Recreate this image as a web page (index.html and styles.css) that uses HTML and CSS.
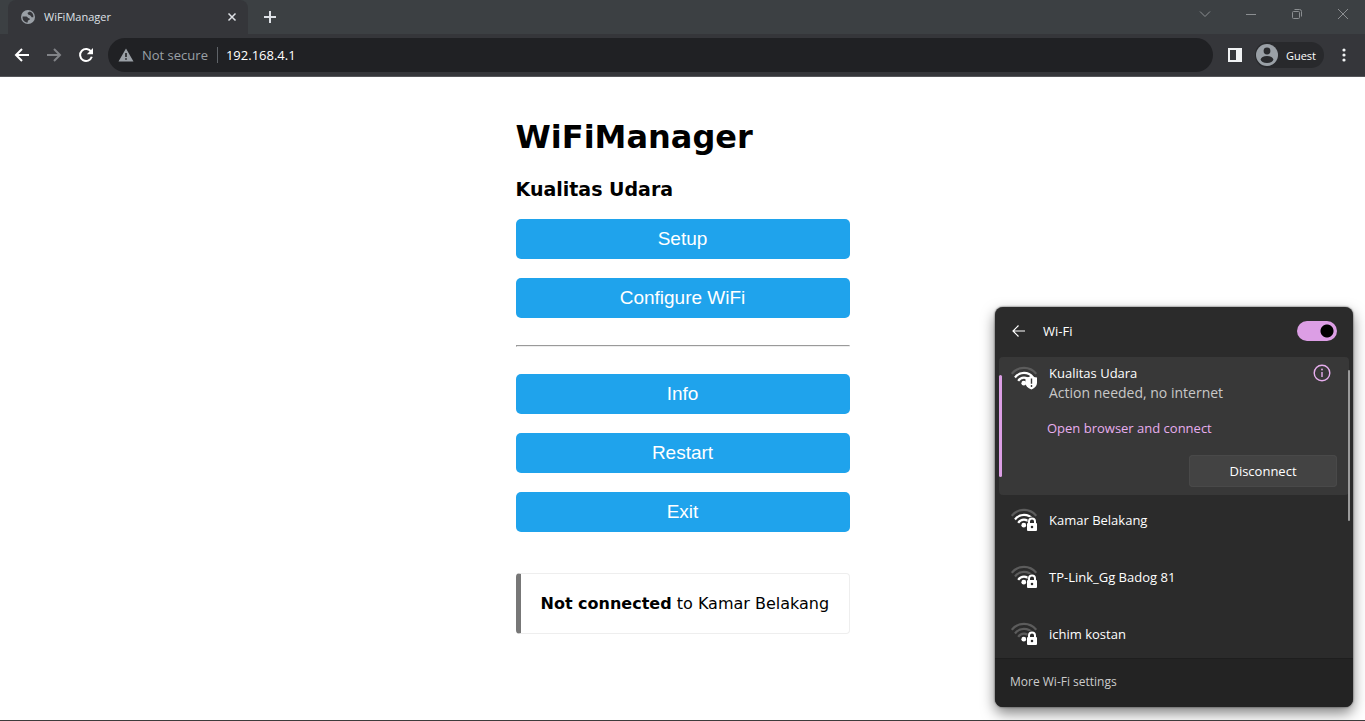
FILE: index.html
```html
<!DOCTYPE html>
<html lang="en">
<head>
<meta charset="utf-8">
<title>WiFiManager</title>
<link rel="stylesheet" href="styles.css">
</head>
<body>
<svg class="defs" aria-hidden="true">
  <symbol id="wifi-base" viewBox="0 0 26 24">
    <path class="arc arc-outer" d="M.8 7.800A15.500 15.500 0 0 1 25.200 7.800"/>
    <path class="arc arc-mid" d="M4 11.500A11.200 11.200 0 0 1 22 11.500"/>
    <path class="arc arc-inner" d="M7.200 14.800A7 7 0 0 1 18.800 14.800"/>
    <circle cx="12.800" cy="17.200" r="2.400" fill="#fff"/>
  </symbol>
  <symbol id="lock" viewBox="0 0 26 24">
    <path d="M15.500 14.800h1V13a4.500 4.500 0 0 1 9 0v1.800h.5V24H15.500z" fill="#2b2b2b"/>
    <path d="M18 16v-2.500a3 3 0 0 1 6 0V16" fill="none" stroke="#fff" stroke-width="2"/>
    <path fill-rule="evenodd" d="M17 15h8a1 1 0 0 1 1 1v6a1 1 0 0 1-1 1h-8a1 1 0 0 1-1-1v-6a1 1 0 0 1 1-1zM21 17.700a1.300 1.300 0 1 0 0 2.600 1.300 1.300 0 0 0 0-2.600z" fill="#fff"/>
  </symbol>
</svg>
<header class="browser">
  <div class="tabstrip">
    <div class="tab">
      <svg class="globe" width="16" height="16" viewBox="0 0 16 16"><circle cx="8" cy="8" r="7" fill="#9aa0a6"/><path d="M2.600 7.500h3.600c1.500 0 1.200 1.700 2.700 1.700 1 0 1.200.8.700 1.500-.6.700-1.600.4-1.800 1.300l-.1 1.500C4.400 13.500 2.200 11 2.600 7.500zM9.600 2.600c-.3 1.100-1.900.5-2 1.600-.1.800.9.700.8 1.400 0 .8 1.500.6 2.200 1.100.8.600.6 1.600 1.500 1.600h1.300C13.700 5.500 12.200 3.200 9.600 2.600z" fill="#35363a"/></svg>
      <span class="tab-title">WiFiManager</span>
      <button class="icon-btn" aria-label="Close tab"><svg width="16" height="16" viewBox="0 0 16 16"><path d="M4.500 4.500l7 7m0-7l-7 7" stroke="#dee1e6" stroke-width="1.500"/></svg></button>
    </div>
    <button class="icon-btn new-tab" aria-label="New tab"><svg width="16" height="16" viewBox="0 0 16 16"><path d="M8 2v12M2 8h12" stroke="#dee1e6" stroke-width="2"/></svg></button>
    <div class="window-controls">
      <button class="icon-btn" aria-label="Search tabs"><svg width="14" height="14" viewBox="0 0 14 14"><path d="M2 4.500l5 5 5-5" fill="none" stroke="#8b8e91"/></svg></button>
      <button class="icon-btn" aria-label="Minimize"><svg width="14" height="14" viewBox="0 0 14 14"><path d="M2 7.500h10" stroke="#8b8e91"/></svg></button>
      <button class="icon-btn" aria-label="Restore"><svg width="14" height="14" viewBox="0 0 14 14"><g fill="none" stroke="#8b8e91"><rect x="2.500" y="4.500" width="7" height="7" rx="1"/><path d="M4.500 2.500h5a2 2 0 0 1 2 2v5"/></g></svg></button>
      <button class="icon-btn" aria-label="Close"><svg width="14" height="14" viewBox="0 0 14 14"><path d="M2 2l10 10M12 2L2 12" stroke="#8b8e91"/></svg></button>
    </div>
  </div>
  <div class="toolbar">
    <button class="icon-btn" aria-label="Back"><svg width="16" height="16" viewBox="0 0 16 16"><path d="M15 8H2.500M8 2L2 8l6 6" fill="none" stroke="#fff" stroke-width="2"/></svg></button>
    <button class="icon-btn" aria-label="Forward"><svg width="16" height="16" viewBox="0 0 16 16"><path d="M1 8h12.500M8 2l6 6-6 6" fill="none" stroke="#818387" stroke-width="2"/></svg></button>
    <button class="icon-btn" aria-label="Reload"><svg width="16" height="16" viewBox="0 0 16 16"><path d="M13.200 4.800A6 6 0 1 0 13.800 9.800" fill="none" stroke="#fff" stroke-width="2"/><path d="M15 1v6.200H8.800z" fill="#fff"/></svg></button>
    <div class="omnibox">
      <svg width="16" height="16" viewBox="0 0 16 16"><path fill-rule="evenodd" d="M8 1.500L15.500 14.500H.5zM7.200 6v4h1.600V6zM7.200 11.200v1.600h1.600v-1.600z" fill="#9aa0a6"/></svg>
      <label class="security" for="address">Not secure</label>
      <input id="address" type="text" value="192.168.4.1">
    </div>
    <button class="icon-btn" aria-label="Side panel"><svg width="16" height="16" viewBox="0 0 16 16"><path fill-rule="evenodd" d="M1 1h14v14H1zM3 3v10h6V3z" fill="#f1f3f4"/></svg></button>
    <button class="profile"><svg width="22" height="22" viewBox="0 0 22 22"><circle cx="11" cy="11" r="11" fill="#9aa0a6"/><circle cx="11" cy="7" r="3.400" fill="#292a2d"/><ellipse cx="11" cy="15.500" rx="6.300" ry="3.500" fill="#292a2d"/></svg>Guest</button>
    <button class="icon-btn" aria-label="Menu"><svg width="16" height="16" viewBox="0 0 16 16" fill="#f1f3f4"><circle cx="8" cy="3" r="1.600"/><circle cx="8" cy="8" r="1.600"/><circle cx="8" cy="13" r="1.600"/></svg></button>
  </div>
</header>
<main class="portal">
  <h1>WiFiManager</h1>
  <h3>Kualitas Udara</h3>
  <div class="actions">
    <button>Setup</button>
    <button>Configure WiFi</button>
  </div>
  <hr>
  <div class="actions">
    <button>Info</button>
    <button>Restart</button>
    <button>Exit</button>
  </div>
  <p class="status"><strong>Not connected</strong> to Kamar Belakang</p>
</main>
<section class="flyout" aria-label="Wi-Fi">
  <div class="flyout-head">
    <button class="icon-btn" aria-label="Back"><svg width="14" height="14" viewBox="0 0 14 14"><path d="M13 7H1.500M6.500 1.500L1 7l5.500 5.500" fill="none" stroke="#fff" stroke-width="1.200"/></svg></button>
    <label for="wifi-toggle">Wi-Fi</label>
    <input id="wifi-toggle" class="toggle" type="checkbox" checked>
  </div>
  <div class="networks">
    <div class="current">
      <svg class="signal s3" width="26" height="24" viewBox="0 0 26 24"><use href="#wifi-base"/><path d="M20.300 9.500c1.700 1.300 3.500 2 5.700 2V17c0 3-2.200 5-5.500 6.500C16.500 22 14.500 20 14.500 17v-5.500c2.300 0 4.300-.7 5.800-2z" fill="#fff"/><path d="M20.500 12.500v5.300M20.500 19V21" stroke="#383838" stroke-width="1.400"/></svg>
      <div class="details">
        <div class="name-row"><span class="name">Kualitas Udara</span>
          <button class="icon-btn info" aria-label="Properties"><svg width="18" height="18" viewBox="0 0 18 18"><circle cx="9" cy="9" r="7.800" fill="none" stroke="#e7aeee" stroke-width="1.400"/><path d="M9 8v5" stroke="#e7aeee" stroke-width="1.400"/><circle cx="9" cy="5.500" r=".9" fill="#e7aeee"/></svg></button>
        </div>
        <div class="state">Action needed, no internet</div>
        <a class="connect" href="#">Open browser and connect</a>
        <button class="disconnect">Disconnect</button>
      </div>
    </div>
    <button class="network"><svg class="signal s3" width="26" height="24" viewBox="0 0 26 24"><use href="#wifi-base"/><use href="#lock"/></svg>Kamar Belakang</button>
    <button class="network"><svg class="signal s2" width="26" height="24" viewBox="0 0 26 24"><use href="#wifi-base"/><use href="#lock"/></svg>TP-Link_Gg Badog 81</button>
    <button class="network"><svg class="signal s1" width="26" height="24" viewBox="0 0 26 24"><use href="#wifi-base"/><use href="#lock"/></svg>ichim kostan</button>
    <span class="scrollbar"></span>
  </div>
  <div class="flyout-foot"><a href="#">More Wi-Fi settings</a></div>
</section>
</body>
</html>
```
FILE: styles.css
```css
* { box-sizing: border-box; }
body {
  margin: 0;
  min-height: 100vh;
  position: relative;
  background: #fff;
  border-bottom: 1px solid #3c3c3c;
  font-family: "DejaVu Sans", sans-serif;
  color: #000;
}
button, input { font-family: inherit; border: 0; padding: 0; margin: 0; }
svg { display: block; flex: none; }
.defs { position: absolute; width: 0; height: 0; }
.icon-btn { background: none; flex: none; }

.browser { font-family: "Open Sans", sans-serif; background: #35363a; border-bottom: 1px solid #55565a; }
.tabstrip { display: flex; align-items: center; height: 34px; padding-left: 8px; background: #3c4043; }
.tab {
  display: flex; align-items: center; gap: 8px;
  width: 240px; height: 34px; padding: 0 8px 0 12px;
  background: #35363a; border-radius: 8px 8px 0 0;
  color: #dee1e6; font-size: 11px;
}
.tab-title { flex: 1; padding-bottom: 2px; }
.new-tab { margin-left: 14px; }
.window-controls { display: flex; gap: 32px; margin-left: auto; padding: 0 15px 6px 0; }
.toolbar { display: flex; align-items: center; gap: 16px; height: 42px; padding: 0 13px 0 14px; }
.omnibox {
  flex: 1; display: flex; align-items: center; gap: 8px;
  height: 34px; margin: 0 -2px; padding: 0 10px;
  border-radius: 17px; background: #202124;
}
.security { color: #9aa0a6; font-size: 13px; line-height: 16px; padding-right: 9px; border-right: 1px solid #5f6368; }
.omnibox input { flex: 1; background: none; color: #fff; font-size: 13px; outline: 0; }
.profile {
  display: flex; align-items: center; gap: 8px;
  height: 26px; margin: 0 -4px; padding: 0 8px 0 1px;
  border-radius: 13px; background: #28292c;
  color: #fff; font-size: 11px;
}

.portal { width: 334px; margin: 0 auto; padding-top: 39px; }
h1 { margin: 0; font-size: 32px; line-height: 42px; }
h3 { margin: 19px 0 18px; font-size: 19px; line-height: 24px; }
.actions { display: grid; gap: 19px; }
.actions button {
  height: 40px; padding-bottom: 1px; border-radius: 5px;
  background: #1fa3ec; color: #fff;
  font-family: "Liberation Sans", Arial, sans-serif; font-size: 19px;
}
hr { margin: 27px 0; border: 1px inset #eee; }
.status {
  margin: 41px 0 0; padding: 20px;
  border: 1px solid #eee; border-left: 5px solid #777; border-radius: 4px;
  font-size: 16px; line-height: 19px; white-space: nowrap;
}

.flyout {
  position: absolute; right: 12px; bottom: 13px; width: 358px;
  overflow: hidden;
  border-radius: 8px; background: #2b2b2b; color: #fff;
  box-shadow: 0 0 2px #333, 0 6px 14px rgba(0, 0, 0, .5);
  font-family: "Open Sans", sans-serif; font-size: 13px;
}
.flyout-head { display: flex; align-items: center; gap: 17px; height: 50px; padding: 0 16px 2px 17px; }
.toggle {
  appearance: none; width: 40px; height: 20px; margin-left: auto;
  border-radius: 10px; background: radial-gradient(circle at 30px 10px, #000 6px, transparent 7px) #dc9ee5;
}
.networks { position: relative; padding: 0 4px; }
.current {
  position: relative; display: flex; gap: 12px;
  padding: 7px 12px 8px; border-radius: 4px; background: #383838;
}
.current::before {
  content: ""; position: absolute; left: 0; top: 18px; bottom: 18px;
  width: 3px; border-radius: 2px; background: #dc9ee5;
}
.signal { --outer: #5c5c5c; --mid: #fff; --inner: #fff; margin-top: 2px; }
.s2 { --mid: #5c5c5c; }
.s1 { --mid: #5c5c5c; --inner: #5c5c5c; }
.arc { fill: none; stroke-width: 2.200; }
.arc-outer { stroke: var(--outer); }
.arc-mid { stroke: var(--mid); }
.arc-inner { stroke: var(--inner); }
.details { flex: 1; display: flex; flex-direction: column; }
.name-row { display: flex; justify-content: space-between; height: 19px; line-height: 19px; }
.info { height: 18px; margin-right: 6px; }
.state { color: #c8c8c8; font-size: 14px; line-height: 20px; }
.connect { align-self: flex-start; margin: 15px 0 17px -2px; color: #e7aeee; line-height: 20px; text-decoration: none; }
.disconnect {
  align-self: flex-end; width: 148px; height: 32px;
  border-radius: 4px; background: #434343; box-shadow: inset 0 0 0 1px #494949;
  color: #fff; font-size: 13px;
}
.network {
  display: flex; align-items: center; gap: 12px;
  width: 100%; height: 57px; padding: 0 12px 8px;
  background: none; color: #fff; font-size: 13px; text-align: left;
}
.network .signal { margin: 0; }
.network:last-of-type { height: 49px; padding: 0 12px; }
.scrollbar { position: absolute; right: 3px; top: 13px; width: 2px; height: 151px; border-radius: 1px; background: #9b9b9b; }
.flyout-foot { padding: 13px 15px 15px; border-top: 1px solid #1e1e1e; background: #232323; font-size: 12px; line-height: 20px; }
.flyout-foot a { color: #ccc; text-decoration: none; }
```
